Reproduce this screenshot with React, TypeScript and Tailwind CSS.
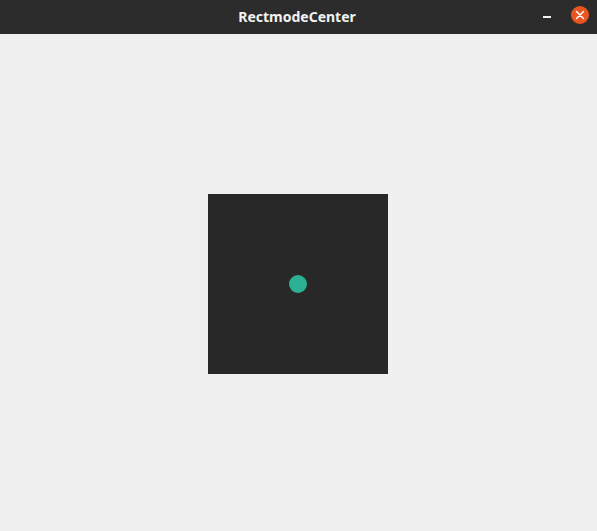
export default function App() {
  return (
    <div className="w-[597px] h-[531px] bg-[#f0f0f0] flex flex-col overflow-hidden">
      {/* Title bar */}
      <div className="h-[34px] bg-[#2c2c2c] flex items-center relative shrink-0">
        <div
          className="flex-1 text-center text-[14px] font-bold text-[#f2f2f2] pr-[3px] mb-[2px]"
          style={{ fontFamily: '"Noto Sans", "DejaVu Sans", sans-serif' }}
        >
          RectmodeCenter
        </div>
        <div className="absolute right-[8px] top-[6px] flex items-center gap-[20px]">
          <span className="w-[8px] h-[1.5px] bg-[#f2f2f2] mt-[4px]" />
          <span className="w-[18px] h-[18px] rounded-full bg-[#e95420] flex items-center justify-center">
            <svg width="10" height="10" viewBox="0 0 10 10">
              <path d="M1.5 1.5l7 7M8.5 1.5l-7 7" stroke="#fff" strokeWidth="1.5" strokeLinecap="round" />
            </svg>
          </span>
        </div>
      </div>

      {/* Canvas */}
      <div className="flex justify-center pt-[160px] pr-[1px]">
        <div className="w-[180px] h-[180px] bg-[#282828] flex items-center justify-center">
          <div className="w-[18px] h-[18px] rounded-full bg-[#2bb094]" />
        </div>
      </div>
    </div>
  );
}
